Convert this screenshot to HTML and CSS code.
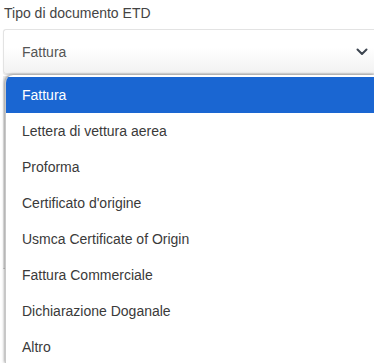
FILE: index.html
```html
<!DOCTYPE html>
<html lang="it">
<head>
  <meta charset="UTF-8">
  <meta name="viewport" content="width=device-width, initial-scale=1.0">
  <title>Tipo di documento ETD</title>
  <link rel="stylesheet" href="styles.css">
</head>
<body>
  <div class="field">
    <label class="field-label">Tipo di documento ETD</label>
    <div class="select">
      <span class="select-value">Fattura</span>
      <svg class="chevron" width="12" height="8" viewBox="0 0 12 8">
        <path d="M1.5 1.5 L6 6 L10.5 1.5" fill="none" stroke="#3d4550" stroke-width="2" stroke-linecap="round" stroke-linejoin="round"/>
      </svg>
    </div>

    <div class="behind">
      <div class="behind-block"></div>
    </div>

    <ul class="menu">
      <li class="menu-item selected">Fattura</li>
      <li class="menu-item">Lettera di vettura aerea</li>
      <li class="menu-item">Proforma</li>
      <li class="menu-item">Certificato d'origine</li>
      <li class="menu-item">Usmca Certificate of Origin</li>
      <li class="menu-item">Fattura Commerciale</li>
      <li class="menu-item">Dichiarazione Doganale</li>
      <li class="menu-item">Altro</li>
    </ul>
  </div>
</body>
</html>
```

FILE: styles.css
```css
html, body {
  height: 363px;
  overflow: hidden;
}
body {
  margin: 0;
  background: #fff;
  font-family: Arial, "Liberation Sans", sans-serif;
  color: #333;
}
.field {
  position: relative;
  height: 363px;
  padding: 4px 0 0 3px;
  box-sizing: border-box;
}
.field-label {
  display: block;
  font-size: 14px;
  color: #444;
  padding-left: 1px;
  height: 25px;
  line-height: 18px;
}
.select {
  display: flex;
  align-items: center;
  justify-content: space-between;
  height: 43px;
  padding: 0 6px 0 18px;
  border: 1px solid #e3e3e3;
  border-right: none;
  border-radius: 3px 0 0 3px;
  background: linear-gradient(#fff 40%, #f2f2f2);
  box-shadow: 0 1px 1px rgba(0, 0, 0, 0.12);
}
.select-value {
  font-size: 14px;
  color: #555;
}
.behind {
  margin-top: 2px;
}
.behind-block {
  height: 192px;
  background: #ececec;
  border-bottom: 1px solid #cfcfcf;
}
.menu {
  position: absolute;
  top: 75px;
  left: 5px;
  right: 0;
  bottom: 0;
  margin: 0;
  padding: 2px 0 0;
  list-style: none;
  background: #fff;
  border-radius: 8px 0 0 0;
  border-left: 1px solid #c8c8c8;
  box-shadow: -1px 0 3px rgba(0, 0, 0, 0.25), 0 -1px 3px rgba(0, 0, 0, 0.2);
  overflow: hidden;
}
.menu-item {
  height: 36px;
  line-height: 36px;
  padding-left: 16px;
  font-size: 14px;
  color: #3a3a3a;
}
.menu-item.selected {
  background: #1a66d2;
  color: #fff;
}
```
